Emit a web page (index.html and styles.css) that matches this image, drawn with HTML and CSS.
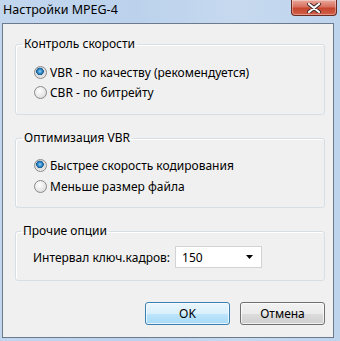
FILE: index.html
```html
<!DOCTYPE html>
<html>
<head>
	<title>Настройки MPEG-4</title>
	<link rel="stylesheet" href="styles.css">
</head>
<body>
	<div class="window">
		<div class="titlebar">
			<span class="title">Настройки MPEG-4</span>
			<div class="close-btn">
				<svg width="16" height="10" viewBox="0 0 16 10">
					<path d="M3 1 L13 9 M13 1 L3 9" stroke="#3a2a2a" stroke-width="4" stroke-linecap="round"/>
					<path d="M3 1 L13 9 M13 1 L3 9" stroke="#ffffff" stroke-width="2.2" stroke-linecap="round"/>
				</svg>
			</div>
		</div>
		<div class="client">
			<fieldset class="group group-speed">
				<legend>Контроль скорости</legend>
				<label class="radio-row"><span class="radio checked"></span>VBR - по качеству (рекомендуется)</label>
				<label class="radio-row"><span class="radio"></span>CBR - по битрейту</label>
			</fieldset>
			<fieldset class="group group-vbr">
				<legend>Оптимизация VBR</legend>
				<label class="radio-row"><span class="radio checked"></span>Быстрее скорость кодирования</label>
				<label class="radio-row"><span class="radio"></span>Меньше размер файла</label>
			</fieldset>
			<fieldset class="group group-other">
				<legend>Прочие опции</legend>
				<div class="combo-row">
					<span class="combo-label">Интервал ключ.кадров:</span>
					<div class="combo">
						<span>150</span>
						<svg width="7" height="4" viewBox="0 0 7 4"><path d="M0 0 H7 L3.5 4 Z" fill="#000"/></svg>
					</div>
				</div>
			</fieldset>
			<div class="buttons">
				<button class="btn btn-default">OK</button>
				<button class="btn">Отмена</button>
			</div>
		</div>
	</div>
</body>
</html>
```
FILE: styles.css
```css
body{
	margin: 0;
	font-family: 'Noto Sans', sans-serif;
	font-size: 12px;
	color: #000;
}
.window{
	width: 340px;
	height: 341px;
	background: linear-gradient(to right, #c2d6ee 0%, #bcd2ec 40%, #c6d9ef 70%, #bed4ed 100%);
	display: flex;
	flex-direction: column;
	overflow: hidden;
}
.titlebar{
	height: 23px;
	display: flex;
	align-items: flex-start;
	justify-content: space-between;
	flex-shrink: 0;
}
.title{
	margin-left: 3px;
	margin-top: 2px;
	line-height: 16px;
	font-size: 12.5px;
	color: #000;
}
.close-btn{
	width: 44px;
	height: 15px;
	margin-right: 3px;
	border: 1px solid #6b2a22;
	border-top: none;
	border-radius: 0 0 4px 4px;
	background: linear-gradient(to bottom, #e9a99c 0%, #d8705f 45%, #c6462f 55%, #d3604a 100%);
	box-shadow: inset 0 0 0 1px rgba(255,255,255,0.35);
	display: flex;
	align-items: center;
	justify-content: center;
}
.client{
	margin: 0 6px 3px 2px;
	flex: 1;
	background: #f0f0f0;
	border: 1px solid #6b7a8d;
	padding: 12px 8px 0 12px;
	display: flex;
	flex-direction: column;
}
.group{
	box-sizing: border-box;
	margin: 0 0 15px 0;
	padding: 0 8px 0 18px;
	border: 1px solid #d5dfe5;
	border-radius: 3px;
	box-shadow: inset 1px 1px 0 #fff;
}
.group legend{
	padding: 0 2px;
	margin-left: -12px;
	line-height: 16px;
}
.group-speed{
	height: 79px;
	padding-top: 10px;
}
.group-speed .radio-row{
	height: 20px;
}
.group-vbr{
	height: 78px;
	padding-top: 9px;
}
.group-other{
	height: 58px;
	padding-top: 7px;
	padding-left: 17px;
	margin-bottom: 21px;
}
.radio-row{
	display: flex;
	align-items: center;
	height: 21px;
}
.radio{
	width: 11px;
	height: 11px;
	border: 1px solid #8a8a8a;
	border-radius: 50%;
	margin-right: 3px;
	background: radial-gradient(circle at 40% 35%, #ffffff 0%, #e6e6e6 60%, #cfcfcf 100%);
	flex-shrink: 0;
}
.radio.checked{
	background: radial-gradient(circle at 45% 40%, #9bd4f5 0%, #2a86c6 25%, #1c5b93 40%, #dcdcdc 45%, #f4f4f4 100%);
}
.combo-row{
	display: flex;
	align-items: center;
}
.combo-label{
	margin-right: 5px;
}
.combo{
	width: 87px;
	height: 22px;
	border: 1px solid #d3d3d3;
	background: #fff;
	display: flex;
	align-items: center;
	justify-content: space-between;
	padding: 0 8px 0 6px;
	box-sizing: border-box;
}
.buttons{
	display: flex;
	justify-content: flex-end;
	gap: 10px;
}
.btn{
	width: 85px;
	height: 23px;
	font-family: 'Noto Sans', sans-serif;
	font-size: 12px;
	color: #000;
	border: 1px solid #707070;
	border-radius: 3px;
	background: linear-gradient(to bottom, #f2f2f2 0%, #ebebeb 50%, #dddddd 51%, #cfcfcf 100%);
	box-shadow: inset 0 0 0 1px rgba(255,255,255,0.7);
	padding: 0;
}
.btn-default{
	border-color: #3c7fb1;
	background: linear-gradient(to bottom, #eaf6fd 0%, #d9f0fc 50%, #bee6fd 51%, #a7d9f5 100%);
}
```
